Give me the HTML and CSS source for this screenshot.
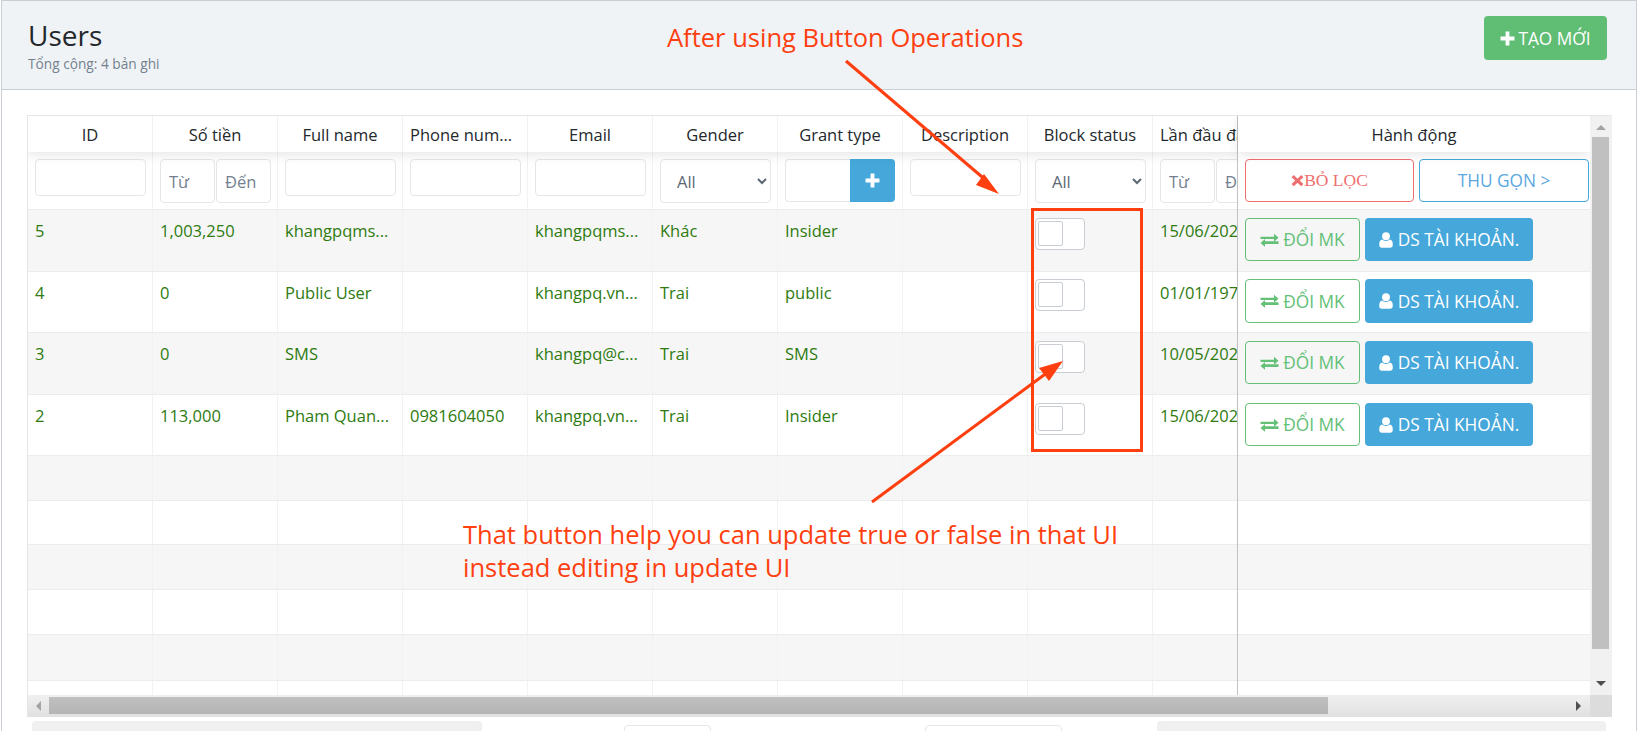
FILE: index.html
```html
<!DOCTYPE html>
<html lang="vi">
<head>
<meta charset="utf-8">
<title>Users</title>
<link rel="stylesheet" href="styles.css">
</head>
<body>
<svg class="sprites" width="0" height="0" aria-hidden="true">
  <symbol id="i-plus" viewBox="0 0 14 14"><path d="M5.2 0.5h3.6v4.7h4.7v3.6H8.8v4.7H5.2V8.8H0.5V5.2h4.7z"/></symbol>
  <symbol id="i-times" viewBox="0 0 14 14"><path d="M3 1l4 4 4-4 2.4 2.4-4 3.6 4 3.8L11 13.2 7 9.4l-4 3.8L.6 10.800l4-3.800-4-3.600z"/></symbol>
  <symbol id="i-exchange" viewBox="0 0 19 14"><path d="M0.500 3.700h13.500V0.800l4.500 4-4.500 3.900V5.900H0.500zM18.500 8.200H5v-2.200L0.500 10 5 13.800v-2.900h13.500z"/></symbol>
  <symbol id="i-user" viewBox="0 0 14 16"><circle cx="7" cy="4.200" r="3.900"/><path d="M3.200 7.600C4.300 8.600 5.600 9 7 9s2.700-.4 3.800-1.400c2 .2 3 2 3 5.200 0 1.900-1 3-2.700 3H2.900C1.200 15.800.2 14.700.2 12.800c0-3.200 1-5 3-5.200z"/></symbol>
</svg>

<div class="card">
  <header class="card-head">
    <div>
      <h1 class="title">Users</h1>
      <p class="subtitle">Tổng cộng: 4 bản ghi</p>
    </div>
    <button class="btn btn-create"><svg class="ico ico-plus"><use href="#i-plus"/></svg>TẠO MỚI</button>
  </header>

  <div class="card-body">
    <div class="grid-wrap">
      <div class="grid-main">
        <div class="scroll-area">
          <div class="row row-head">
            <div class="cell center">ID</div>
            <div class="cell center">Số tiền</div>
            <div class="cell center">Full name</div>
            <div class="cell">Phone num...</div>
            <div class="cell center">Email</div>
            <div class="cell center">Gender</div>
            <div class="cell center">Grant type</div>
            <div class="cell center">Description</div>
            <div class="cell center">Block status</div>
            <div class="cell">Lần đầu đăng nhập</div>
          </div>
          <div class="row row-filter">
            <div class="cell"><input class="field"></div>
            <div class="cell range"><input class="field tall" placeholder="Từ"><input class="field tall" placeholder="Đến"></div>
            <div class="cell"><input class="field"></div>
            <div class="cell"><input class="field"></div>
            <div class="cell"><input class="field"></div>
            <div class="cell"><select class="field tall select"><option>All</option></select></div>
            <div class="cell group"><input class="field group-input"><button class="group-btn"><svg class="ico ico-plus-sm"><use href="#i-plus"/></svg></button></div>
            <div class="cell"><input class="field"></div>
            <div class="cell"><select class="field tall select"><option>All</option></select></div>
            <div class="cell range"><input class="field tall" placeholder="Từ"><input class="field tall" placeholder="Đến"></div>
          </div>
          <div class="row row-data">
            <div class="cell">5</div><div class="cell">1,003,250</div><div class="cell">khangpqms...</div><div class="cell"></div><div class="cell">khangpqms...</div><div class="cell">Khác</div><div class="cell">Insider</div><div class="cell"></div><div class="cell"><span class="toggle"><span class="knob"></span></span></div><div class="cell">15/06/2022</div>
          </div>
          <div class="row row-data">
            <div class="cell">4</div><div class="cell">0</div><div class="cell">Public User</div><div class="cell"></div><div class="cell">khangpq.vn...</div><div class="cell">Trai</div><div class="cell">public</div><div class="cell"></div><div class="cell"><span class="toggle"><span class="knob"></span></span></div><div class="cell">01/01/1970</div>
          </div>
          <div class="row row-data">
            <div class="cell">3</div><div class="cell">0</div><div class="cell">SMS</div><div class="cell"></div><div class="cell">khangpq@c...</div><div class="cell">Trai</div><div class="cell">SMS</div><div class="cell"></div><div class="cell"><span class="toggle"><span class="knob"></span></span></div><div class="cell">10/05/2022</div>
          </div>
          <div class="row row-data">
            <div class="cell">2</div><div class="cell">113,000</div><div class="cell">Pham Quan...</div><div class="cell">0981604050</div><div class="cell">khangpq.vn...</div><div class="cell">Trai</div><div class="cell">Insider</div><div class="cell"></div><div class="cell"><span class="toggle"><span class="knob"></span></span></div><div class="cell">15/06/2022</div>
          </div>
          <div class="row row-empty"><div class="cell"></div><div class="cell"></div><div class="cell"></div><div class="cell"></div><div class="cell"></div><div class="cell"></div><div class="cell"></div><div class="cell"></div><div class="cell"></div><div class="cell"></div></div>
          <div class="row row-empty"><div class="cell"></div><div class="cell"></div><div class="cell"></div><div class="cell"></div><div class="cell"></div><div class="cell"></div><div class="cell"></div><div class="cell"></div><div class="cell"></div><div class="cell"></div></div>
          <div class="row row-empty"><div class="cell"></div><div class="cell"></div><div class="cell"></div><div class="cell"></div><div class="cell"></div><div class="cell"></div><div class="cell"></div><div class="cell"></div><div class="cell"></div><div class="cell"></div></div>
          <div class="row row-empty"><div class="cell"></div><div class="cell"></div><div class="cell"></div><div class="cell"></div><div class="cell"></div><div class="cell"></div><div class="cell"></div><div class="cell"></div><div class="cell"></div><div class="cell"></div></div>
          <div class="row row-empty"><div class="cell"></div><div class="cell"></div><div class="cell"></div><div class="cell"></div><div class="cell"></div><div class="cell"></div><div class="cell"></div><div class="cell"></div><div class="cell"></div><div class="cell"></div></div>
          <div class="row row-empty"><div class="cell"></div><div class="cell"></div><div class="cell"></div><div class="cell"></div><div class="cell"></div><div class="cell"></div><div class="cell"></div><div class="cell"></div><div class="cell"></div><div class="cell"></div></div>
        </div>

        <div class="pinned">
          <div class="row row-head"><div class="cell center wide">Hành động</div></div>
          <div class="row row-filter"><div class="cell wide actions">
            <button class="btn btn-clear"><svg class="ico ico-times"><use href="#i-times"/></svg>BỎ LỌC</button>
            <button class="btn btn-collapse">THU GỌN &gt;</button>
          </div></div>
          <div class="row row-data"><div class="cell wide actions"><button class="btn btn-pass"><svg class="ico ico-ex"><use href="#i-exchange"/></svg>ĐỔI MK</button><button class="btn btn-list"><svg class="ico ico-user"><use href="#i-user"/></svg>DS TÀI KHOẢN.</button></div></div>
          <div class="row row-data"><div class="cell wide actions"><button class="btn btn-pass"><svg class="ico ico-ex"><use href="#i-exchange"/></svg>ĐỔI MK</button><button class="btn btn-list"><svg class="ico ico-user"><use href="#i-user"/></svg>DS TÀI KHOẢN.</button></div></div>
          <div class="row row-data"><div class="cell wide actions"><button class="btn btn-pass"><svg class="ico ico-ex"><use href="#i-exchange"/></svg>ĐỔI MK</button><button class="btn btn-list"><svg class="ico ico-user"><use href="#i-user"/></svg>DS TÀI KHOẢN.</button></div></div>
          <div class="row row-data"><div class="cell wide actions"><button class="btn btn-pass"><svg class="ico ico-ex"><use href="#i-exchange"/></svg>ĐỔI MK</button><button class="btn btn-list"><svg class="ico ico-user"><use href="#i-user"/></svg>DS TÀI KHOẢN.</button></div></div>
          <div class="row row-empty"><div class="cell wide"></div></div>
          <div class="row row-empty"><div class="cell wide"></div></div>
          <div class="row row-empty"><div class="cell wide"></div></div>
          <div class="row row-empty"><div class="cell wide"></div></div>
          <div class="row row-empty"><div class="cell wide"></div></div>
          <div class="row row-empty"><div class="cell wide"></div></div>
        </div>

        <div class="vbar">
          <span class="tri tri-up"></span>
          <span class="vthumb"></span>
          <span class="tri tri-down"></span>
        </div>
      </div>

      <div class="hbar">
        <span class="tri tri-left"></span>
        <span class="hthumb"></span>
        <span class="tri tri-right"></span>
        <span class="hcorner"></span>
      </div>
    </div>

    <div class="footer">
      <span class="foot-pill"></span>
      <span class="foot-input foot-input-a"></span>
      <span class="foot-input foot-input-b"></span>
      <span class="foot-pill foot-pill-b"></span>
    </div>
  </div>
</div>

<div class="notes">
  <svg class="notes-svg" width="1641" height="731" viewBox="0 0 1641 731" aria-hidden="true">
    <rect class="note-box" x="1032.500" y="209.500" width="109" height="241"/>
    <line class="note-line" x1="846" y1="61" x2="988" y2="182"/>
    <polygon class="note-head" points="999,194 976,185 984,174"/>
    <line class="note-line" x1="872" y1="502" x2="1048" y2="372"/>
    <polygon class="note-head" points="1063,361 1039,368 1049,381"/>
  </svg>
  <p class="note note-a">After using Button Operations</p>
  <p class="note note-b">That button help you can update true or false in that UI<br>instead editing in update UI</p>
</div>
</body>
</html>
```
FILE: styles.css
```css
* { box-sizing: border-box; }
html, body { margin: 0; height: 731px; overflow: hidden; background: #fff; }
body {
  position: relative;
  font-family: "Open Sans", "Noto Sans", sans-serif;
  font-size: 16.500px;
  color: #23282c;
}
.sprites { position: absolute; }

.card {
  margin-left: 1px;
  width: 1636px;
  border: 1px solid #c8ced3;
  border-bottom: 0;
  height: 740px;
}
.card-head {
  height: 89px;
  background: #f0f3f5;
  border-bottom: 1px solid #c8ced3;
  padding: 16px 29px 0 26px;
  display: flex;
  justify-content: space-between;
  align-items: flex-start;
}
.title { margin: 0; font-size: 28px; line-height: 36px; font-weight: 500; }
.subtitle { margin: 2px 0 0; font-size: 13.700px; line-height: 18px; color: #73818f; }

.btn {
  font-family: inherit;
  font-size: 17.300px;
  border-radius: 4px;
  border: 1px solid transparent;
  display: inline-flex;
  flex: none;
  align-items: center;
  justify-content: center;
  cursor: pointer;
  white-space: nowrap;
  padding: 0;
}
.btn-create { width: 123px; height: 44px; margin-top: -1px; background: #5fbd74; color: #fff; }
.ico { fill: currentColor; flex: none; }
.ico-plus { width: 15px; height: 15px; margin-right: 3px; }
.ico-plus-sm { width: 15px; height: 15px; }
.ico-times { width: 13px; height: 13px; }
.ico-ex { width: 19px; height: 14px; margin-right: 4px; }
.ico-user { width: 14px; height: 16px; margin-right: 5px; }

.card-body { padding: 25px 25px 0; }
.grid-wrap { width: 1585px; border: 1px solid #e4e7ea; border-bottom: 0; border-right: 0; }
.grid-main { display: flex; height: 579px; overflow: hidden; }
.scroll-area { width: 1209px; flex: none; overflow: hidden; }
.pinned { width: 353px; flex: none; border-left: 1px solid #c2c2c2; position: relative; }

.row { display: flex; width: 1250px; border-top: 1px solid #ececec; }
.pinned .row { width: 352px; }
.row-head { height: 36px; align-items: stretch; border-top: 0; box-shadow: 0 3px 12px rgba(0, 0, 0, .1); position: relative; }
.row-filter { height: 57px; border-top: 0; }
.row-data { height: 61px; }
.row-data:nth-child(3), .row-data:nth-child(5) { height: 62px; }
.row-empty { height: 45px; }
.row-empty:nth-child(8) { height: 44px; }
.row-empty:nth-child(11) { height: 46px; }
.row-data:nth-child(odd), .row-empty:nth-child(odd) { background: #f6f6f6; }

.cell {
  width: 125px;
  flex: none;
  padding: 0 7px;
  border-right: 1px solid #f2f2f2;
  overflow: hidden;
  white-space: nowrap;
}
.cell.wide { width: 352px; border-right: 0; }
.row-head .cell { line-height: 37px; }
.center { text-align: center; }
.row-filter .cell { padding-top: 7px; }
.row-data .cell { padding-top: 8px; color: #2e7b10; line-height: 26px; }
.row-data:nth-child(4) .cell.actions { padding-top: 7px; }
.row-data:nth-child(4) .btn { height: 44px; }
.row-data:nth-child(4) .toggle { margin-top: -1px; }

.field {
  display: block;
  width: 111px;
  height: 37px;
  padding: 0 8px;
  border: 1px solid #e4e7ea;
  border-radius: 4px;
  background: #fff;
  font-family: inherit;
  font-size: 16.500px;
  color: #5c6873;
}
.field::placeholder { color: #73818f; opacity: 1; }
.field.tall { height: 44px; }
.range { display: flex; gap: 1px; }
.range .field { width: 55px; flex: none; }
.select { padding-left: 12px; }

.group { display: flex; }
.group-input { width: 65px; height: 43px; border-right: 0; border-radius: 4px 0 0 4px; }
.group-btn {
  width: 46px;
  height: 43px;
  border: 0;
  padding: 0;
  background: #45a7da;
  color: #fff;
  border-radius: 0 4px 4px 0;
  display: flex;
  align-items: center;
  justify-content: center;
}

.toggle {
  display: block;
  width: 50px;
  height: 32px;
  background: #fff;
  border: 1px solid #c8ced3;
  border-radius: 4px;
  padding: 2px;
}
.knob { display: block; width: 25px; height: 25px; background: #fff; border: 1px solid #c8ced3; border-radius: 2px; }

.actions { display: flex; gap: 5px; align-items: flex-start; padding-right: 0; }
.btn-clear, .btn-collapse { height: 43px; }
.btn-clear {
  width: 169px;
  background: #fff;
  border-color: #ef6f6f;
  color: #ef6f6f;
  font-family: "Liberation Serif", serif;
  font-size: 17.500px;
}
.btn-collapse { width: 170px; background: #fff; border-color: #45a7da; color: #5ba8df; }
.btn-pass { width: 115px; height: 43px; background: transparent; border-color: #63c076; color: #63c076; }
.btn-list { width: 168px; height: 43px; background: #45a7da; color: #fff; }

.vbar { width: 22px; flex: none; background: #f1f1f1; position: relative; }
.vthumb { position: absolute; left: 2px; top: 21px; width: 17px; height: 512px; background: #c0c0c0; }
.tri { position: absolute; width: 0; height: 0; border-style: solid; border-color: transparent; }
.tri-up { left: 6px; top: 9px; border-width: 0 5px 5px; border-bottom-color: #a3a3a3; }
.tri-down { left: 6px; top: 565px; border-width: 5px 5px 0; border-top-color: #505050; }

.hbar {
  height: 22px;
  width: 1584px;
  position: relative;
  background: linear-gradient(#f0f0f0, #e0e0e0);
}
.hthumb { position: absolute; left: 21px; top: 2px; width: 1279px; height: 17px; background: linear-gradient(#c0c0c0, #b4b4b4); }
.hcorner { position: absolute; right: 0; top: 0; width: 22px; height: 22px; background: #dcdcdc; }
.tri-left { left: 8px; top: 6px; border-width: 5px 5px 5px 0; border-right-color: #a3a3a3; }
.tri-right { left: 1548px; top: 6px; border-width: 5px 0 5px 5px; border-left-color: #505050; }

.footer { display: flex; align-items: flex-start; padding: 4px 5px 0; }
.foot-pill { width: 450px; height: 30px; background: #f0f0f0; border-radius: 4px; }
.foot-pill-b { width: 449px; margin-left: auto; }
.foot-input { height: 30px; margin-top: 4px; background: #fff; border: 1px solid #e4e7ea; border-radius: 4px; }
.foot-input-a { width: 87px; margin-left: 142px; }
.foot-input-b { width: 137px; margin-left: 214px; }

.notes { position: absolute; inset: 0; pointer-events: none; }
.notes-svg { position: absolute; left: 0; top: 0; }
.note-box { fill: none; stroke: #fe3f10; stroke-width: 3; }
.note-line { stroke: #fe3f10; stroke-width: 3; }
.note-head { fill: #fe3f10; }
.note {
  position: absolute;
  margin: 0;
  color: #fe3f10;
  font-family: "Open Sans", "Noto Sans", sans-serif;
  font-size: 25.500px;
  line-height: 33px;
  white-space: nowrap;
}
.note-a { left: 667px; top: 21px; }
.note-b { left: 463px; top: 518px; }
```
